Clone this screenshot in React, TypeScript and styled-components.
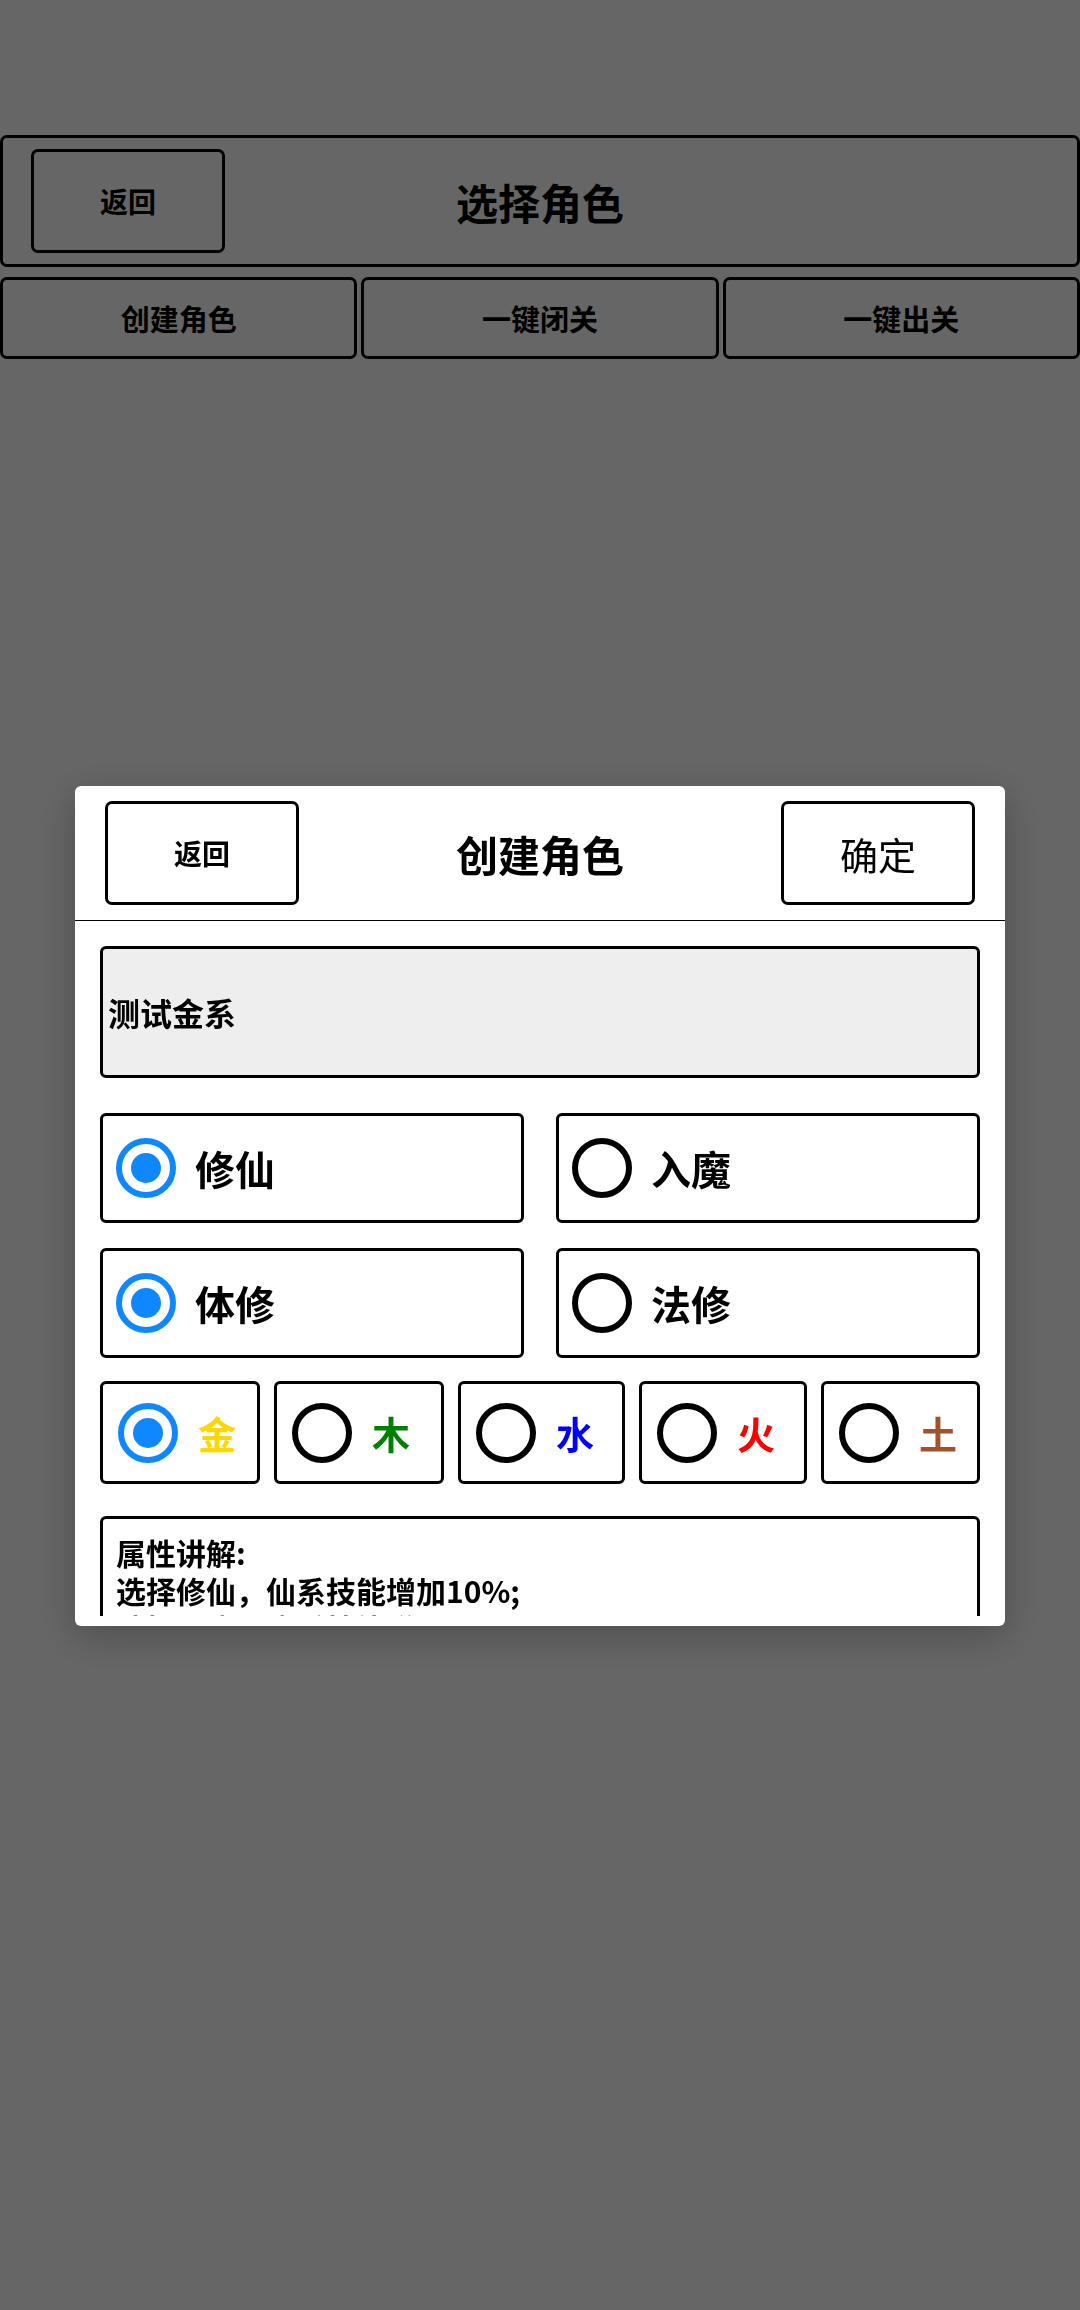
import styled, { createGlobalStyle } from "styled-components";

const GlobalStyle = createGlobalStyle`
  html, body {
    margin:0;
    padding:0;
    background:#fff;
    font-family:"Noto Sans CJK SC", "Noto Sans", sans-serif;
    color:#000;
  }
  * { box-sizing:border-box; }
`;

const Page = styled.div`
  padding-top:135px;
  min-height:2310px;
`;

const Header = styled.header`
  display:grid;
  grid-template-columns:1fr auto 1fr;
  align-items:center;
  height:132px;
  border:3px solid #000;
  border-radius:7px;
  padding:0 28px;
`;

const Button = styled.button<{ $size?: number; $weight?: number }>`
  width:194px;
  height:104px;
  background:transparent;
  border:3px solid #000;
  border-radius:7px;
  font-family:inherit;
  font-size:${props => props.$size ?? 28}px;
  font-weight:${props => props.$weight ?? 700};
  color:#000;
  padding:0;
`;

const HeaderButton = styled(Button)`
  justify-self:start;
`;

const Title = styled.h1`
  margin:0;
  font-size:42px;
  font-weight:700;
`;

const ActionRow = styled.div`
  display:flex;
  gap:4px;
  margin-top:10px;
`;

const ActionButton = styled.button`
  flex:1;
  height:82px;
  background:transparent;
  border:3px solid #000;
  border-radius:7px;
  font-family:inherit;
  font-size:29px;
  font-weight:700;
  color:#000;
`;

const Overlay = styled.div`
  position:fixed;
  inset:0;
  background:rgba(0,0,0,0.6);
  display:flex;
  flex-direction:column;
  align-items:center;
  padding-top:786px;
`;

const Modal = styled.div`
  width:930px;
  height:840px;
  background:#fff;
  border-radius:6px;
  box-shadow:0 10px 40px rgba(0,0,0,0.25);
  display:flex;
  flex-direction:column;
  padding-bottom:10px;
`;

const ModalHeader = styled.div`
  display:flex;
  justify-content:space-between;
  align-items:center;
  height:135px;
  padding:0 30px;
  border-bottom:1px solid #000;
  flex-shrink:0;
`;

const ModalTitle = styled.h2`
  margin:0;
  font-size:42px;
  font-weight:700;
`;

const ModalBody = styled.div`
  flex:1;
  overflow:hidden;
  padding:25px;
`;

const NameInput = styled.input`
  display:block;
  width:100%;
  height:132px;
  background:#eee;
  border:3px solid #000;
  border-radius:6px;
  padding:0 5px;
  font-family:inherit;
  font-size:32px;
  font-weight:700;
  color:#000;
  outline:none;
`;

const RadioGrid = styled.div<{ $top: number }>`
  display:grid;
  grid-template-columns:1fr 1fr;
  column-gap:32px;
  margin-top:${props => props.$top}px;
`;

const OptionBox = styled.label<{ $height: number; $pad: number; $gap: number }>`
  display:flex;
  align-items:center;
  gap:${props => props.$gap}px;
  height:${props => props.$height}px;
  border:3px solid #000;
  border-radius:6px;
  padding-left:${props => props.$pad}px;
`;

const Circle = styled.span<{ $checked: boolean }>`
  width:60px;
  height:60px;
  border-radius:50%;
  border:6px solid ${props => (props.$checked ? "#0f88ff" : "#000")};
  display:flex;
  align-items:center;
  justify-content:center;
  flex-shrink:0;
  &::after {
    content:"";
    display:${props => (props.$checked ? "block" : "none")};
    width:30px;
    height:30px;
    border-radius:50%;
    background:#0f88ff;
  }
`;

const OptionLabel = styled.span<{ $color?: string; $size: number }>`
  font-size:${props => props.$size}px;
  font-weight:700;
  color:${props => props.$color ?? "#000"};
  line-height:1;
`;

const ElementRow = styled.div`
  display:grid;
  grid-template-columns:160fr 170fr 167fr 168fr 159fr;
  column-gap:14px;
  margin-top:23px;
`;

const Description = styled.div`
  margin-top:32px;
  border:3px solid #000;
  border-radius:6px;
  padding:14px 13px;
  font-size:30px;
  font-weight:700;
  line-height:38px;
`;

const paths = [
  [
    { name: "修仙", checked: true },
    { name: "入魔", checked: false },
  ],
  [
    { name: "体修", checked: true },
    { name: "法修", checked: false },
  ],
];

const elements = [
  { name: "金", color: "#ffd700", checked: true },
  { name: "木", color: "#008000", checked: false },
  { name: "水", color: "#0000ff", checked: false },
  { name: "火", color: "#ff0000", checked: false },
  { name: "土", color: "#a0522d", checked: false },
];

const notes = [
  "属性讲解:",
  "选择修仙，仙系技能增加10%;",
  "选择入魔，魔系技能增加10%;",
  "选择体修，体系技能增加10%;",
  "选择法修，法系技能增加10%;",
];

function App() {
  return (
    <>
      <GlobalStyle />
      <Page>
        <Header>
          <HeaderButton>返回</HeaderButton>
          <Title>选择角色</Title>
          <span />
        </Header>
        <ActionRow>
          <ActionButton>创建角色</ActionButton>
          <ActionButton>一键闭关</ActionButton>
          <ActionButton>一键出关</ActionButton>
        </ActionRow>
      </Page>
      <Overlay>
        <Modal>
          <ModalHeader>
            <Button>返回</Button>
            <ModalTitle>创建角色</ModalTitle>
            <Button $size={38} $weight={400}>确定</Button>
          </ModalHeader>
          <ModalBody>
            <NameInput value="测试金系" readOnly />
            {paths.map((row, i) => (
              <RadioGrid key={i} $top={i === 0 ? 35 : 25}>
                {row.map(opt => (
                  <OptionBox key={opt.name} $height={110} $pad={13} $gap={19}>
                    <Circle $checked={opt.checked} />
                    <OptionLabel $size={40}>{opt.name}</OptionLabel>
                  </OptionBox>
                ))}
              </RadioGrid>
            ))}
            <ElementRow>
              {elements.map(el => (
                <OptionBox key={el.name} $height={103} $pad={15} $gap={20}>
                  <Circle $checked={el.checked} />
                  <OptionLabel $size={38} $color={el.color}>{el.name}</OptionLabel>
                </OptionBox>
              ))}
            </ElementRow>
            <Description>
              {notes.map(line => (
                <div key={line}>{line}</div>
              ))}
            </Description>
          </ModalBody>
        </Modal>
      </Overlay>
    </>
  );
}

export default App;
